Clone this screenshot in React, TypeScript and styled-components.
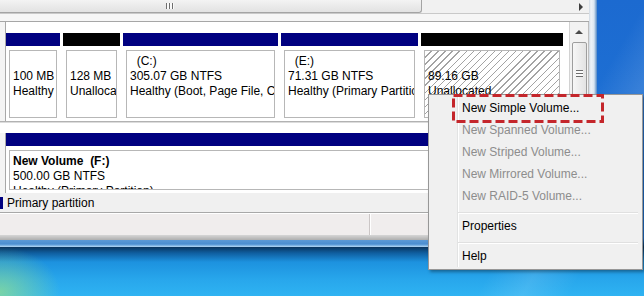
import React from "react";
import styled, { createGlobalStyle } from "styled-components";

const GlobalStyle = createGlobalStyle`
  html, body {
    margin: 0;
    padding: 0;
  }
  body {
    width: 644px;
    height: 296px;
    overflow: hidden;
    font-family: "Liberation Sans", Arial, sans-serif;
    font-size: 12px;
    color: #000;
  }
`;

const Screen = styled.div`
  position: relative;
  width: 644px;
  height: 296px;
  overflow: hidden;
  background:
    radial-gradient(ellipse 60px 45px at 0px 292px, rgba(170, 235, 120, 0.6), rgba(170, 235, 120, 0) 100%),
    linear-gradient(120deg, rgba(255, 255, 255, 0) 0 560px, rgba(255, 255, 255, 0.12) 600px, rgba(255, 255, 255, 0) 640px),
    linear-gradient(180deg, #1c6ad0 0, #1e76d8 238px, #0a355e 247px, #0f5e9f 253px, #1d92df 262px, #28a7ec 280px, #2fb3f2 296px);
`;

/* window shell */
const Window = styled.div`
  width: 597px;
  height: 247px;
  display: flex;
  flex-direction: column;
`;

const WindowBody = styled.div`
  display: flex;
  height: 240px;
`;

const Main = styled.div`
  width: 589px;
  display: flex;
  flex-direction: column;
  background: #f0f0f0;
`;

const SideFrame = styled.div`
  width: 8px;
  background: linear-gradient(90deg, #cfd8e2 0, #eef3f8 2px, #dbe6f1 5px, #7ea6d2 7px, #4f86c4 8px);
`;

const BottomFrame = styled.div`
  height: 7px;
  background: linear-gradient(180deg, #5c9ad6 0, #4b8ed0 4px, #8fc0ea 6px, #b8d8f2 7px);
`;

/* horizontal scrollbar at the top */
const HScroll = styled.div`
  height: 13px;
  display: flex;
  background: #f1f1f1;
  border-bottom: 1px solid #c9c9c9;
`;

const HThumb = styled.div`
  width: 422px;
  box-sizing: border-box;
  border: 1px solid #a4a4a4;
  border-top: none;
  border-left: none;
  border-radius: 0 0 3px 0;
  background: linear-gradient(180deg, #f3f3f3, #e2e2e2);
  display: flex;
  align-items: center;
  padding-left: 166px;
`;

const HGrip = styled.span`
  width: 8px;
  height: 6px;
  background: repeating-linear-gradient(90deg, #6e6e6e 0 1px, #fafafa 1px 3px);
`;

const HTrack = styled.div`
  flex: 1;
  display: flex;
  align-items: center;
  justify-content: flex-end;
  padding-right: 6px;
`;

const ArrowRight = styled.span`
  width: 0;
  height: 0;
  border-top: 4px solid transparent;
  border-bottom: 4px solid transparent;
  border-left: 4px solid #3e3e3e;
`;

const TopGap = styled.div`
  height: 7px;
  background: #f6f6f6;
  border-bottom: 1px solid #a6a6a6;
`;

/* graphical disk view */
const DiskArea = styled.div`
  height: 171px;
  display: flex;
  background: #fff;
`;

const DiskList = styled.div`
  flex: 1;
  display: flex;
  flex-direction: column;
  overflow: hidden;
`;

const DiskRow = styled.div<{ $height: number; $top: number; $line?: boolean }>`
  display: flex;
  height: ${(p) => p.$height}px;
  flex-shrink: 0;
  box-sizing: border-box;
  padding-top: ${(p) => p.$top}px;
  border-bottom: ${(p) => (p.$line ? "1px solid #b2b2b2" : "none")};
`;

const DiskStub = styled.div<{ $pull: number }>`
  width: 5px;
  margin-top: -${(p) => p.$pull}px;
  background: #f4f4f4;
  border-right: 1px solid #a8a8a8;
`;

const RowGap = styled.div`
  height: 11px;
  flex-shrink: 0;
  border-top: 1px solid #dcdcdc;
  box-sizing: border-box;
`;

const Partitions = styled.div`
  flex: 1;
  display: flex;
  gap: 3px;
`;

const Partition = styled.div<{ $width: number }>`
  width: ${(p) => p.$width}px;
  flex-shrink: 0;
  display: flex;
  flex-direction: column;
`;

const Bar = styled.div<{ $color: string }>`
  height: 13px;
  flex-shrink: 0;
  background: ${(p) => p.$color};
`;

const PartBody = styled.div`
  flex: 1;
  min-height: 0;
  display: flex;
  padding: 4px 3px 3px 3px;
`;

const PartBox = styled.div<{ $hatched?: boolean }>`
  flex: 1;
  min-width: 0;
  border: 1px solid #b7b7b7;
  padding: 3px 0 0 3px;
  overflow: hidden;
  white-space: pre;
  line-height: 15px;
  background: ${(p) =>
    p.$hatched
      ? "repeating-linear-gradient(135deg, #ffffff 0 4px, #a3a3a3 4px 5px)"
      : "#fff"};
`;

const VolName = styled.div<{ $bold?: boolean }>`
  font-weight: ${(p) => (p.$bold ? 700 : 400)};
  height: 15px;
`;

const VScroll = styled.div`
  width: 20px;
  box-sizing: border-box;
  border-left: 1px solid #d2d2d2;
  border-right: 1px solid #bdbdbd;
  background: #f2f2f2;
  display: flex;
  flex-direction: column;
  align-items: center;
`;

const ArrowUp = styled.span`
  margin-top: 8px;
  width: 0;
  height: 0;
  border-left: 4px solid transparent;
  border-right: 4px solid transparent;
  border-bottom: 4px solid #4a4a4a;
`;

const VThumb = styled.div`
  margin-top: 8px;
  width: 15px;
  height: 130px;
  box-sizing: border-box;
  border: 1px solid #9e9e9e;
  border-radius: 2px;
  background: linear-gradient(90deg, #f7f7f7, #e3e3e3);
  display: flex;
  justify-content: center;
  padding-top: 27px;
`;

const VGrip = styled.span`
  width: 7px;
  height: 7px;
  background: repeating-linear-gradient(180deg, #6e6e6e 0 1px, #fafafa 1px 3px);
`;

/* legend + status bar */
const Legend = styled.div`
  height: 19px;
  display: flex;
  align-items: center;
  border-bottom: 1px solid #a8a8a8;
  background: #f0f0f0;
`;

const Swatch = styled.span<{ $color: string }>`
  width: 3px;
  height: 12px;
  background: ${(p) => p.$color};
  margin-right: 4px;
`;

const Status = styled.div`
  height: 21px;
  display: flex;
  border-top: 1px solid #fff;
  background: #f0eded;
`;

const StatusCell = styled.div<{ $width?: number }>`
  width: ${(p) => (p.$width ? `${p.$width}px` : "auto")};
  flex: ${(p) => (p.$width ? "0 0 auto" : "1")};
  border-right: 1px solid #cbc6c6;
  box-shadow: 1px 0 0 #ffffff;
`;

const StatusBottom = styled.div`
  height: 5px;
  background: linear-gradient(180deg, #d6d6d6, #aeaeae);
`;

/* context menu */
const Menu = styled.div`
  position: absolute;
  left: 428px;
  top: 94px;
  width: 215px;
  height: 176px;
  box-sizing: border-box;
  padding: 2px;
  background: #f0f0f0;
  border: 1px solid #979797;
  box-shadow: 2px 2px 3px rgba(0, 0, 0, 0.35);
`;

const Gutter = styled.div`
  position: absolute;
  left: 28px;
  top: 2px;
  bottom: 2px;
  width: 1px;
  background: #e2e3e3;
  border-right: 1px solid #ffffff;
`;

const MenuItem = styled.div<{ $disabled?: boolean }>`
  position: relative;
  height: 22px;
  line-height: 22px;
  padding-left: 31px;
  font-size: 12px;
  color: ${(p) => (p.$disabled ? "#8d8d8d" : "#000")};
`;

const MenuSep = styled.div`
  position: relative;
  height: 1px;
  margin: 5px 2px 1px 27px;
  background: #e0e0e0;
  border-bottom: 1px solid #ffffff;
`;

const Highlight = styled.svg`
  position: absolute;
  left: 452px;
  top: 94px;
`;

type Part = {
  width: number;
  color: string;
  label?: string;
  size: string;
  status: string;
  hatched?: boolean;
};

const parts: Part[] = [
  { width: 54, color: "#000080", size: "100 MB", status: "Healthy" },
  { width: 57, color: "#000000", size: "128 MB", status: "Unallocated" },
  { width: 155, color: "#000080", label: "  (C:)", size: "305.07 GB NTFS", status: "Healthy (Boot, Page File, Crash Dump, Primary Partition)" },
  { width: 137, color: "#000080", label: "  (E:)", size: "71.31 GB NTFS", status: "Healthy (Primary Partition)" },
  { width: 142, color: "#000000", size: "89.16 GB", status: "Unallocated", hatched: true },
];

const menu: { text: string; disabled?: boolean; sep?: boolean }[] = [
  { text: "New Simple Volume..." },
  { text: "New Spanned Volume...", disabled: true },
  { text: "New Striped Volume...", disabled: true },
  { text: "New Mirrored Volume...", disabled: true },
  { text: "New RAID-5 Volume...", disabled: true },
  { text: "", sep: true },
  { text: "Properties" },
  { text: "", sep: true },
  { text: "Help" },
];

const App = () => {
  return (
    <Screen>
      <GlobalStyle />
      <Window>
        <WindowBody>
          <Main>
            <HScroll>
              <HThumb>
                <HGrip />
              </HThumb>
              <HTrack>
                <ArrowRight />
              </HTrack>
            </HScroll>
            <TopGap />
            <DiskArea>
              <DiskList>
                <DiskRow $height={100} $top={11} $line>
                  <DiskStub $pull={11} />
                  <Partitions>
                    {parts.map((p, i) => (
                      <Partition key={i} $width={p.width}>
                        <Bar $color={p.color} />
                        <PartBody>
                          <PartBox $hatched={p.hatched}>
                            <VolName>{p.label ?? ""}</VolName>
                            <div>{p.size}</div>
                            <div>{p.status}</div>
                          </PartBox>
                        </PartBody>
                      </Partition>
                    ))}
                  </Partitions>
                </DiskRow>
                <RowGap />
                <DiskRow $height={60} $top={0}>
                  <DiskStub $pull={0} />
                  <Partitions>
                    <Partition $width={559}>
                      <Bar $color="#000080" />
                      <PartBody>
                        <PartBox>
                          <VolName $bold>{"New Volume  (F:)"}</VolName>
                          <div>500.00 GB NTFS</div>
                          <div>Healthy (Primary Partition)</div>
                        </PartBox>
                      </PartBody>
                    </Partition>
                  </Partitions>
                </DiskRow>
              </DiskList>
              <VScroll>
                <ArrowUp />
                <VThumb>
                  <VGrip />
                </VThumb>
              </VScroll>
            </DiskArea>
            <Legend>
              <Swatch $color="#000080" />
              Primary partition
            </Legend>
            <Status>
              <StatusCell $width={369} />
              <StatusCell />
            </Status>
            <StatusBottom />
          </Main>
          <SideFrame />
        </WindowBody>
        <BottomFrame />
      </Window>

      <Menu>
        <Gutter />
        {menu.map((m, i) =>
          m.sep ? (
            <MenuSep key={i} />
          ) : (
            <MenuItem key={i} $disabled={m.disabled}>
              {m.text}
            </MenuItem>
          )
        )}
      </Menu>

      <Highlight width="152" height="29" viewBox="0 0 152 29">
        <rect
          x="1.5"
          y="1.5"
          width="149"
          height="26"
          fill="none"
          stroke="#c4262b"
          strokeWidth="3"
          strokeDasharray="9 4"
        />
      </Highlight>
    </Screen>
  );
};

export default App;
